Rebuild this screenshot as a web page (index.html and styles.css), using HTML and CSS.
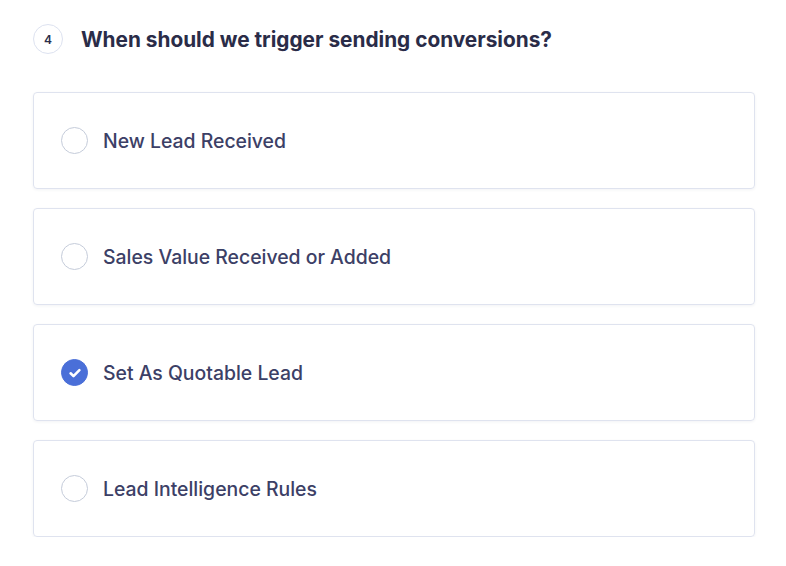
FILE: index.html
```html
<!DOCTYPE html>
<html lang="en">
<head>
  <meta charset="UTF-8" />
  <title>Conversion trigger</title>
  <link rel="stylesheet" href="styles.css">
</head>
<body>
  <section class="question">
    <div class="question-head">
      <span class="step">4</span>
      <h2>When should we trigger sending conversions?</h2>
    </div>

    <div class="options">
      <label class="option">
        <span class="radio"></span>
        <span class="option-text">New Lead Received</span>
      </label>
      <label class="option">
        <span class="radio"></span>
        <span class="option-text">Sales Value Received or Added</span>
      </label>
      <label class="option selected">
        <span class="radio">
          <svg width="16" height="16" viewBox="0 0 16 16"><path d="M3.6 8.3l2.9 2.8 5.9-5.9" fill="none" stroke="#fff" stroke-width="2.6" stroke-linecap="round" stroke-linejoin="round"/></svg>
        </span>
        <span class="option-text">Set As Quotable Lead</span>
      </label>
      <label class="option">
        <span class="radio"></span>
        <span class="option-text">Lead Intelligence Rules</span>
      </label>
    </div>
  </section>
</body>
</html>
```

FILE: styles.css
```css
body {
  margin: 0;
  background: #ffffff;
  font-family: Inter, "Noto Sans", sans-serif;
  color: #3b3f63;
}

.question {
  padding: 24px 31px 0 33px;
}

.question-head {
  display: flex;
  align-items: center;
  gap: 18px;
  margin-bottom: 38px;
}

.step {
  width: 28px;
  height: 28px;
  border: 1px solid #dde2f0;
  border-radius: 50%;
  display: flex;
  align-items: center;
  justify-content: center;
  font-size: 12px;
  font-weight: 600;
  color: #2c2f4b;
}

.question-head h2 {
  margin: 0;
  font-size: 20.8px;
  font-weight: 700;
  color: #2a2c48;
}

.options {
  display: flex;
  flex-direction: column;
  gap: 19px;
}

.option {
  display: flex;
  align-items: center;
  gap: 15px;
  height: 95px;
  padding: 0 27px;
  border: 1px solid #dfe3ef;
  border-radius: 4px;
  box-shadow: 0 1px 3px rgba(40, 50, 90, 0.06);
  cursor: pointer;
}

.radio {
  width: 25px;
  height: 25px;
  border: 1.5px solid #c5ccda;
  border-radius: 50%;
  display: flex;
  align-items: center;
  justify-content: center;
  flex-shrink: 0;
}

.selected .radio {
  background: #4a6fd8;
  border-color: #4a6fd8;
}

.option-text {
  font-size: 19.4px;
  font-weight: 500;
  color: #3c4066;
}
```
